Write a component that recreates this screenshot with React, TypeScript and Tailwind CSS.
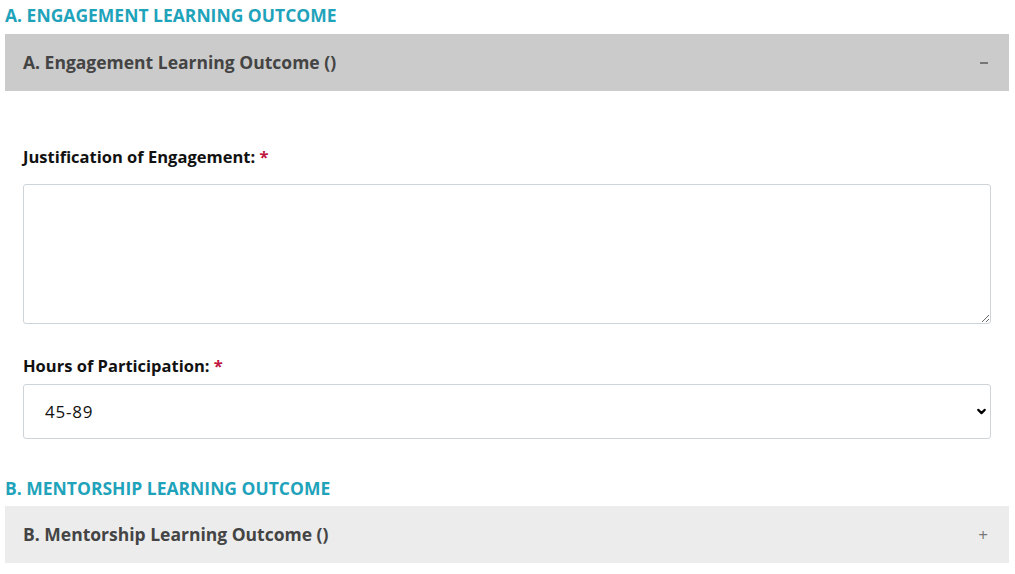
import { ChevronDown } from "lucide-react";

const font = { fontFamily: '"Open Sans", "Noto Sans", sans-serif' };

const SectionTitle = ({ children }: { children: string }) => (
  <h2 className="px-[5px] text-[17.5px] leading-[24px] font-bold text-[#1fa3bb]">{children}</h2>
);

const Label = ({ children }: { children: string }) => (
  <label className="block text-[16.5px] leading-[22px] font-bold text-[#111]">
    {children} <span className="text-[#c0163f]">*</span>
  </label>
);

export default function App() {
  return (
    <div className="w-[1015px] h-[574px] overflow-hidden bg-white" style={font}>
      <div className="pt-[3px]">
        <SectionTitle>A. ENGAGEMENT LEARNING OUTCOME</SectionTitle>

        <div className="mx-[5px] mt-[7px] w-[1004px]">
          {/* open accordion */}
          <div className="flex h-[57px] items-center justify-between bg-[#cbcbcb] pl-[18px] pr-[21px]">
            <span className="text-[17.5px] font-bold text-[#444]">A. Engagement Learning Outcome ()</span>
            <span className="h-[2px] w-[8px] bg-[#777]" />
          </div>

          <div className="px-[18px] pt-[55px]">
            <Label>Justification of Engagement:</Label>
            <textarea className="mt-[16px] block h-[140px] w-[968px] resize-y rounded-[3px] border border-[#cfd4d9] bg-white px-3 py-2 text-[16px] outline-none" />

            <div className="mt-[31px]">
              <Label>Hours of Participation:</Label>
            </div>
            <div className="relative mt-[7px] w-[968px]">
              <select
                defaultValue="45-89"
                className="block h-[55px] w-full appearance-none rounded-[3px] border border-[#cfd4d9] bg-white pl-[21px] text-[17px] tracking-[0.8px] text-[#111] outline-none"
              >
                <option>0-44</option>
                <option>45-89</option>
                <option>90+</option>
              </select>
              <ChevronDown className="pointer-events-none absolute right-[3px] top-[21px] h-[13px] w-[13px] text-black" strokeWidth={4} />
            </div>
          </div>
        </div>

        <div className="mt-[37px]">
          <SectionTitle>B. MENTORSHIP LEARNING OUTCOME</SectionTitle>
        </div>
        <div className="mx-[5px] mt-[6px] flex h-[57px] w-[1004px] items-center justify-between bg-[#ececec] pl-[18px] pr-[21px]">
          <span className="text-[17.5px] font-bold text-[#444]">B. Mentorship Learning Outcome ()</span>
          <span className="text-[17px] leading-none text-[#777]">+</span>
        </div>
      </div>
    </div>
  );
}
